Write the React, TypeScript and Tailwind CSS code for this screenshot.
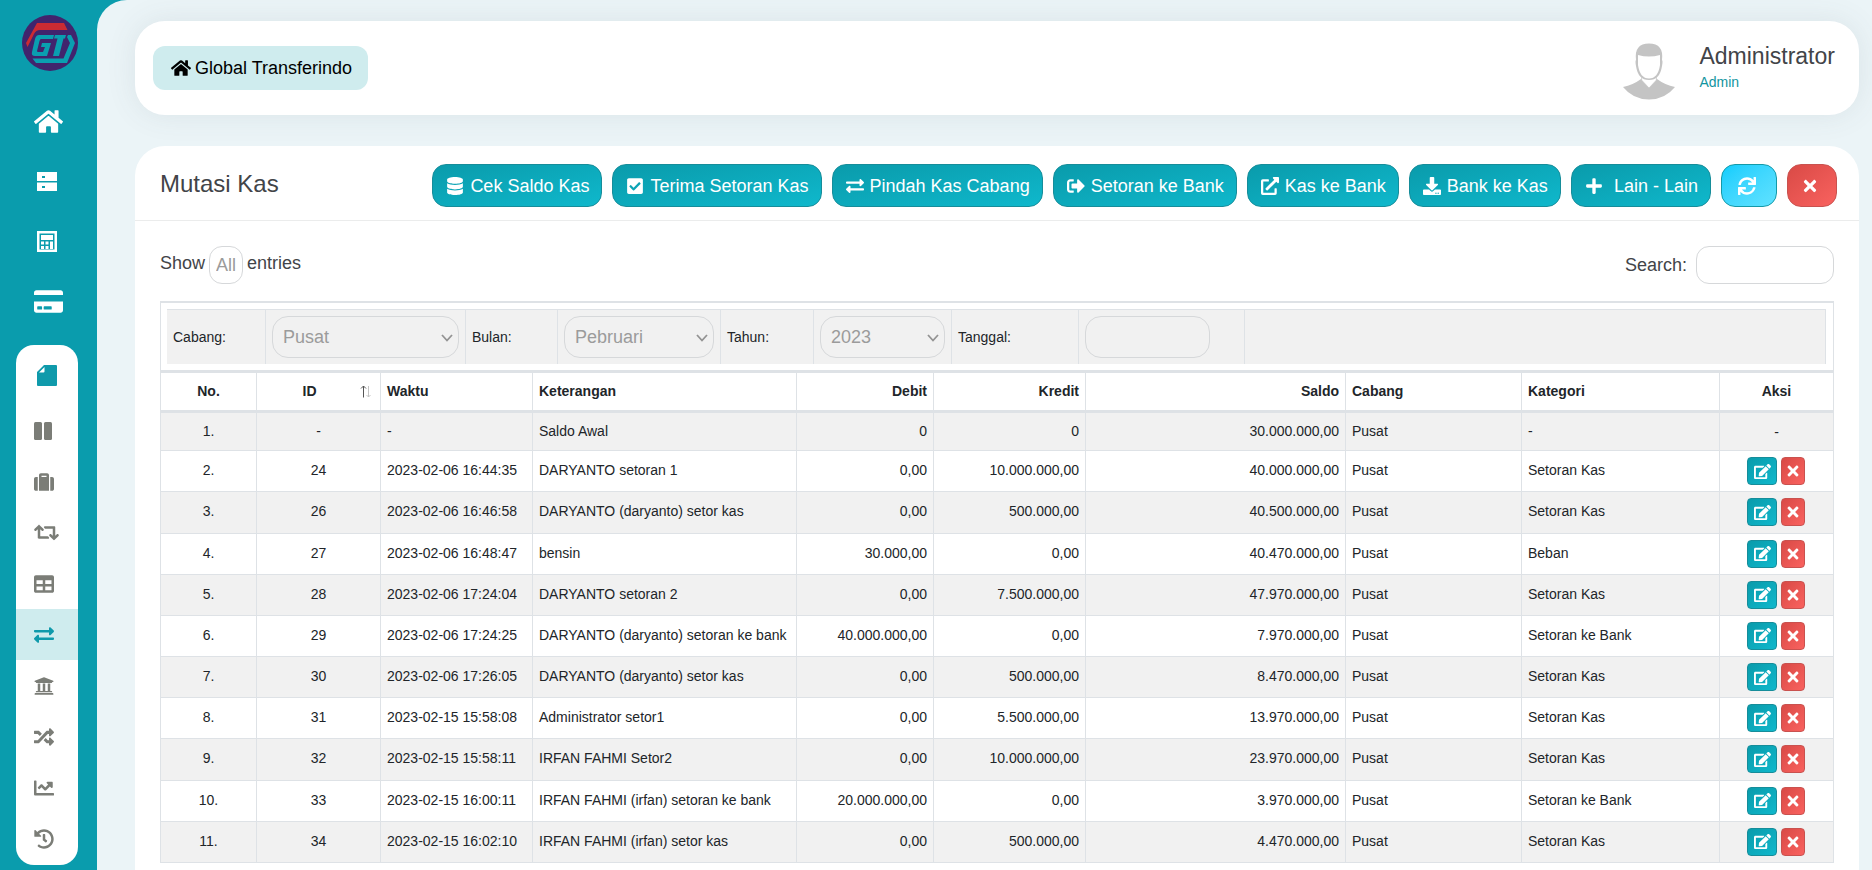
import React from "react";
import {
  FaHome, FaCreditCard, FaSuitcase, FaRetweet, FaTable, FaExchangeAlt, FaUniversity, FaRandom,
  FaChartLine, FaHistory, FaDatabase, FaCheckSquare, FaSignOutAlt, FaExternalLinkAlt, FaDownload,
  FaPlus, FaSync, FaTimes, FaEdit,
} from "react-icons/fa";

function Logo() {
  return (
    <svg viewBox="0 0 56 56" className="size-14" aria-hidden="true">
      <circle cx="28" cy="28" r="28" fill="#41246d" />
      <path d="M15 8H42L45.500 15H18Q14 15 12 19L5.500 32L4 28Z" fill="#cb2b33" />
      <path d="M17 20H32L31 24H19Q18 24 17.500 26L15 36Q15 37 16 37H21L23 32H19L20 28H29L25 41H13Q9 41 10 37L13 24Q14 20 17 20Z" fill="#0a9fb0" />
      <path d="M33 20H44L43 23.500H41.500L37 41H31L35.500 23.500H32Z" fill="#0a9fb0" />
      <path d="M46 20H49L53 28L45 48H14L10.500 43.500H41.500L48 28L45 22Z" fill="#0a9fb0" />
    </svg>
  );
}

function Drawers() {
  return (
    <svg viewBox="0 0 20 19" className="mr-[3px] h-[19px] w-5" fill="currentColor" aria-hidden="true">
      <path fillRule="evenodd" d="M0 0H20V9H0ZM5 4V6H8V4ZM0 10.500H20V19H0ZM5 14V16H8V14Z" />
    </svg>
  );
}

function Calculator() {
  return (
    <svg viewBox="0 0 20 21" className="mr-[3px] h-[21px] w-5" fill="currentColor" aria-hidden="true">
      <path fillRule="evenodd" d="M0 0H20V21H0ZM2.500 2.500V18.500H17.500V2.500Z" />
      <path d="M4 4H16V9H4ZM4 10.500H7V13.500H4ZM8.500 10.500H11.500V13.500H8.500ZM4 15H7V18H4ZM8.500 15H11.500V18H8.500ZM13 10.500H16V18H13Z" />
    </svg>
  );
}

function Note() {
  return (
    <svg viewBox="0 0 20 21" className="h-[21px] w-5" fill="currentColor" aria-hidden="true">
      <path d="M7 0H19Q20 0 20 1V20Q20 21 19 21H1Q0 21 0 20V7ZM7.500 2L2 7.500H6.500Q7.500 7.500 7.500 6.500Z" fillRule="evenodd" />
    </svg>
  );
}

function Columns() {
  return (
    <svg viewBox="0 0 18 18" className="size-[18px]" fill="currentColor" aria-hidden="true">
      <rect width="8" height="18" rx="1.500" />
      <rect x="10" width="8" height="18" rx="1.500" />
    </svg>
  );
}

function Avatar() {
  return (
    <svg viewBox="0 0 52 58" className="mt-[5px] h-[58px] w-[52px]" aria-hidden="true">
      <path d="M0 45Q10 43 18 37L26 46L34 37Q42 43 52 45Q42 57.500 26 57.500Q10 57.500 0 45Z" fill="#c4c4c4" />
      <path d="M19 33L18.500 38L26 46L33.500 38L33 33Z" fill="#fff" stroke="#c4c4c4" strokeWidth="0.800" />
      <path d="M13 18Q11 1.500 26 1.500Q41 1.500 39 18Q40 19 39 24Q37 38 26 38Q15 38 13 24Q12 19 13 18Z" fill="#c4c4c4" />
      <path d="M15 13Q26 16 37 13V23Q35 36.500 26 36.500Q17 36.500 15 23Z" fill="#fff" />
    </svg>
  );
}

const mainMenu = [
  { label: "Beranda", icon: <FaHome size={29} /> },
  { label: "Master", icon: <Drawers /> },
  { label: "Kalkulasi", icon: <Calculator /> },
  { label: "Pembayaran", icon: <FaCreditCard size={29} /> },
];

const subMenu = [
  { label: "Kolom", icon: <Columns /> },
  { label: "Koper", icon: <FaSuitcase size={20} /> },
  { label: "Transfer", icon: <FaRetweet size={25} /> },
  { label: "Tabel", icon: <FaTable size={20} /> },
  { label: "Mutasi Kas", icon: <FaExchangeAlt size={20} />, active: true },
  { label: "Bank", icon: <FaUniversity size={20} /> },
  { label: "Acak", icon: <FaRandom size={20} /> },
  { label: "Grafik", icon: <FaChartLine size={20} /> },
  { label: "Riwayat", icon: <FaHistory size={20} /> },
];

const actions = [
  { label: "Cek Saldo Kas", icon: <FaDatabase size={18} /> },
  { label: "Terima Setoran Kas", icon: <FaCheckSquare size={18} /> },
  { label: "Pindah Kas Cabang", icon: <FaExchangeAlt size={18} /> },
  { label: "Setoran ke Bank", icon: <FaSignOutAlt size={18} /> },
  { label: "Kas ke Bank", icon: <FaExternalLinkAlt size={18} /> },
  { label: "Bank ke Kas", icon: <FaDownload size={18} /> },
  { label: "Lain - Lain", icon: <FaPlus size={18} />, wide: true },
];

const rows = [
  ["1.", "-", "-", "Saldo Awal", "0", "0", "30.000.000,00", "Pusat", "-"],
  ["2.", "24", "2023-02-06 16:44:35", "DARYANTO setoran 1", "0,00", "10.000.000,00", "40.000.000,00", "Pusat", "Setoran Kas"],
  ["3.", "26", "2023-02-06 16:46:58", "DARYANTO (daryanto) setor kas", "0,00", "500.000,00", "40.500.000,00", "Pusat", "Setoran Kas"],
  ["4.", "27", "2023-02-06 16:48:47", "bensin", "30.000,00", "0,00", "40.470.000,00", "Pusat", "Beban"],
  ["5.", "28", "2023-02-06 17:24:04", "DARYANTO setoran 2", "0,00", "7.500.000,00", "47.970.000,00", "Pusat", "Setoran Kas"],
  ["6.", "29", "2023-02-06 17:24:25", "DARYANTO (daryanto) setoran ke bank", "40.000.000,00", "0,00", "7.970.000,00", "Pusat", "Setoran ke Bank"],
  ["7.", "30", "2023-02-06 17:26:05", "DARYANTO (daryanto) setor kas", "0,00", "500.000,00", "8.470.000,00", "Pusat", "Setoran Kas"],
  ["8.", "31", "2023-02-15 15:58:08", "Administrator setor1", "0,00", "5.500.000,00", "13.970.000,00", "Pusat", "Setoran Kas"],
  ["9.", "32", "2023-02-15 15:58:11", "IRFAN FAHMI Setor2", "0,00", "10.000.000,00", "23.970.000,00", "Pusat", "Setoran Kas"],
  ["10.", "33", "2023-02-15 16:00:11", "IRFAN FAHMI (irfan) setoran ke bank", "20.000.000,00", "0,00", "3.970.000,00", "Pusat", "Setoran ke Bank"],
  ["11.", "34", "2023-02-15 16:02:10", "IRFAN FAHMI (irfan) setor kas", "0,00", "500.000,00", "4.470.000,00", "Pusat", "Setoran Kas"],
];

const headings = ["No.", "ID", "Waktu", "Keterangan", "Debit", "Kredit", "Saldo", "Cabang", "Kategori", "Aksi"];
const aligns = [
  "text-center", "text-center", "text-left", "text-left", "text-right",
  "text-right", "text-right", "text-left", "text-left", "text-center",
];

function FilterSelect({ id, value }: { id: string; value: string }) {
  return (
    <div className="relative">
      <select id={id} defaultValue={value} className="block h-[42px] w-full appearance-none rounded-2xl border border-[#d6d8da] bg-transparent pl-[10px] text-lg leading-6 text-[#9b9b9b]">
        <option>{value}</option>
      </select>
      <svg viewBox="0 0 12 8" className="pointer-events-none absolute top-[18px] right-[6px] h-2 w-3" fill="none" stroke="#939393" strokeWidth="1.800" aria-hidden="true">
        <path d="M1 1L6 6.500L11 1" />
      </svg>
    </div>
  );
}

function FilterBar() {
  const cell = "border-r border-[#dee2e6] px-[6px]";
  return (
    <div className="mr-[1px] grid h-[55px] grid-cols-[99px_200px_92px_163px_93px_138px_127px_166px_1fr] items-stretch border-t border-r border-[#dee2e6] bg-[#f1f1f1] *:flex *:flex-col *:justify-center">
      <label htmlFor="cabang" className={cell}>Cabang:</label>
      <div className={cell}><FilterSelect id="cabang" value="Pusat" /></div>
      <label htmlFor="bulan" className={cell}>Bulan:</label>
      <div className={cell}><FilterSelect id="bulan" value="Pebruari" /></div>
      <label htmlFor="tahun" className={cell}>Tahun:</label>
      <div className={cell}><FilterSelect id="tahun" value="2023" /></div>
      <label htmlFor="tanggal" className={cell}>Tanggal:</label>
      <div className={cell}>
        <input id="tanggal" type="text" className="h-[42px] w-[125px] rounded-2xl border border-[#d6d8da] bg-transparent px-3 text-lg" />
      </div>
      <div />
    </div>
  );
}

export default function App() {
  return (
    <div className="flex min-h-screen bg-[#0a9cad] font-['Liberation_Sans',Arial,sans-serif] text-[#212529]">
      <aside className="flex w-[97px] shrink-0 flex-col">
        <a href="#" aria-label="Global Transferindo" className="mt-[15px] ml-[22px] w-14"><Logo /></a>
        <nav className="mt-5 flex flex-col text-white">
          {mainMenu.map((m) => (
            <a key={m.label} href="#" aria-label={m.label} className="flex h-[60px] items-center justify-center">
              {m.icon}
            </a>
          ))}
        </nav>
        <nav className="mt-[14px] mr-[19px] ml-4 flex flex-col overflow-hidden rounded-[18px] bg-white pb-[1px] text-[#7b7d77]">
          <a href="#" aria-label="Catatan" className="flex h-[60px] items-center pl-[21px] text-[#0f9aab]"><Note /></a>
          {subMenu.map((m) => (
            <a key={m.label} href="#" aria-label={m.label} className={m.active ? "flex h-[51px] items-center bg-[#cfecee] pl-[18px] text-[#0f9aab]" : "flex h-[51px] items-center pl-[18px]"}>
              {m.icon}
            </a>
          ))}
        </nav>
      </aside>

      <div className="flex min-w-0 grow flex-col rounded-tl-[30px] bg-[#ebf4f7] pt-[21px] pr-[13px] pl-[38px]">
        <header className="flex h-[94px] items-center justify-between rounded-[30px] bg-white pr-6 pl-[18px] shadow-[0_0_30px_rgba(80,90,100,0.10)]">
          <a href="#" className="flex h-11 items-center gap-1 rounded-xl bg-[#cfecee] pr-4 pl-[18px] text-lg text-black">
            <FaHome size={20} />
            Global Transferindo
          </a>
          <div className="flex items-center">
            <Avatar />
            <div className="ml-6 flex flex-col">
              <span className="text-[23px] leading-7 text-[#424448]">Administrator</span>
              <span className="text-sm leading-6 text-[#1295a0]">Admin</span>
            </div>
          </div>
        </header>

        <main className="mt-[31px] flex grow flex-col rounded-t-[30px] bg-white">
          <div className="flex h-[75px] items-start justify-between border-b border-[#ebecec] pt-[18px] pr-[22px] pl-[25px]">
            <h1 className="pt-1 text-2xl leading-8 text-[#424448]">Mutasi Kas</h1>
            <div className="flex gap-[10px] text-lg text-white">
              {actions.map((a) => (
                <button key={a.label} type="button" className={"flex h-[43px] items-center rounded-[14px] border border-[#168d9a] bg-linear-to-br from-[#0a9bab] to-[#0fb8cc] pr-3 pl-[13px] whitespace-nowrap " + (a.wide ? "gap-[11px]" : "gap-[6px]")}>
                  {a.icon}
                  {a.label}
                </button>
              ))}
              <button type="button" aria-label="Muat ulang" className="flex h-[43px] w-14 items-center justify-center rounded-[14px] border border-[#1499a8] bg-linear-to-br from-[#06cdfd] to-[#5fe2ff] pr-1">
                <FaSync size={18} />
              </button>
              <button type="button" aria-label="Tutup" className="flex h-[43px] w-[50px] items-center justify-center rounded-[14px] border border-[#c9524f] bg-linear-to-br from-[#d94a46] to-[#f9625f] pr-1">
                <FaTimes size={18} />
              </button>
            </div>
          </div>

          <div className="flex items-start justify-between pt-[25px] pr-[25px] pl-[25px] text-lg text-[#424448]">
            <div className="flex">
              <label htmlFor="entries" className="leading-[34px]">Show</label>
              <select id="entries" defaultValue="All" className="mx-1 h-[38px] w-[34px] appearance-none rounded-[13px] border border-[#d6d8da] bg-white pl-[6px] text-lg text-[#9b9b9b]">
                <option>All</option>
              </select>
              <span className="leading-[34px]">entries</span>
            </div>
            <label className="flex items-center gap-[9px]">
              Search:
              <input type="search" className="h-[38px] w-[138px] rounded-[13px] border border-[#d6d8da] bg-white px-3" />
            </label>
          </div>

          <div className="mt-[17px] pr-[25px] pb-2 pl-[25px] text-sm">
            <table className="h-[562px] w-full table-fixed border-separate border-spacing-0 border-l border-[#dee2e6]">
              <colgroup>
                <col className="w-[96px]" />
                <col className="w-[124px]" />
                <col className="w-[152px]" />
                <col className="w-[264px]" />
                <col className="w-[137px]" />
                <col className="w-[152px]" />
                <col className="w-[260px]" />
                <col className="w-[176px]" />
                <col className="w-[198px]" />
                <col />
              </colgroup>
              <thead>
                <tr>
                  <td colSpan={10} className="h-[72px] border-t-2 border-r border-b-3 border-[#dee2e6] px-[6px] py-[6px]">
                    <FilterBar />
                  </td>
                </tr>
                <tr>
                  {headings.map((h, i) => (
                    <th key={h} scope="col" className={"h-10 border-r border-b-3 border-[#dee2e6] px-[6px] pb-[1px] font-bold " + aligns[i]}>
                      {h === "ID" ? (
                        <div className="flex items-center pr-[2px]">
                          <span className="grow pr-1">ID</span>
                          <svg viewBox="0 0 12 14" className="h-[14px] w-3" fill="none" aria-hidden="true">
                            <path d="M3.500 13.500V2M1 4.500L3.500 2L6 4.500" stroke="#555" />
                            <path d="M8.500 2V13M6.500 11L8.500 13L10.500 11" stroke="#c4c4c4" />
                          </svg>
                        </div>
                      ) : h}
                    </th>
                  ))}
                </tr>
              </thead>
              <tbody>
                {rows.map((r, n) => (
                  <tr key={r[0]} className={n === 0 ? "h-[38px] bg-[#f1f1f1]" : "h-[41px] odd:bg-[#f1f1f1]"}>
                    {r.map((c, i) => (
                      <td key={i} className={"border-r border-b border-[#dee2e6] px-[6px] pb-[2px] whitespace-nowrap " + aligns[i]}>{c}</td>
                    ))}
                    <td className="border-r border-b border-[#dee2e6] text-center">
                      {n === 0 ? "-" : (
                        <div className="flex justify-center gap-1 text-white">
                          <button type="button" aria-label="Ubah" className="flex h-7 w-[30px] items-center justify-center rounded border border-[#168d9a] bg-linear-to-br from-[#0a9bab] to-[#0fb8cc]">
                            <FaEdit size={17} />
                          </button>
                          <button type="button" aria-label="Hapus" className="flex h-7 w-6 items-center justify-center rounded border border-[#c9524f] bg-linear-to-br from-[#d94a46] to-[#f9625f]">
                            <FaTimes size={16} />
                          </button>
                        </div>
                      )}
                    </td>
                  </tr>
                ))}
              </tbody>
            </table>
          </div>
        </main>
      </div>
    </div>
  );
}
